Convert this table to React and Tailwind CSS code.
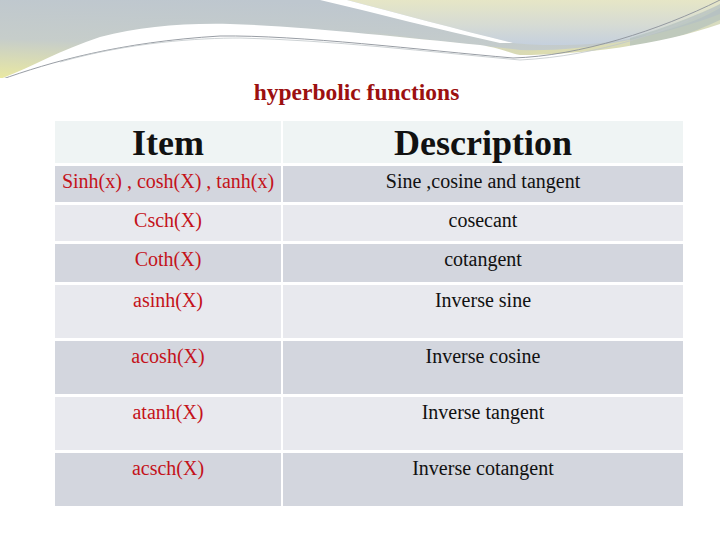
import React from 'react';

const rows = [
  { item: 'Sinh(x) , cosh(X) , tanh(x)', desc: 'Sine ,cosine and tangent', h: 'h-[36px]', bg: 'bg-[#d3d6de]' },
  { item: 'Csch(X)', desc: 'cosecant', h: 'h-[36px]', bg: 'bg-[#e8e9ee]' },
  { item: 'Coth(X)', desc: 'cotangent', h: 'h-[38px]', bg: 'bg-[#d3d6de]' },
  { item: 'asinh(X)', desc: 'Inverse sine', h: 'h-[53px]', bg: 'bg-[#e8e9ee]' },
  { item: 'acosh(X)', desc: 'Inverse cosine', h: 'h-[53px]', bg: 'bg-[#d3d6de]' },
  { item: 'atanh(X)', desc: 'Inverse tangent', h: 'h-[53px]', bg: 'bg-[#e8e9ee]' },
  { item: 'acsch(X)', desc: 'Inverse cotangent', h: 'h-[53px]', bg: 'bg-[#d3d6de]' },
];

// decorative header swoosh
const Swoosh = () => (
  <svg width="720" height="78" viewBox="0 0 720 78" className="block">
    <defs>
      <linearGradient id="leftFill" x1="0.35" y1="0" x2="0" y2="1">
        <stop offset="0" stopColor="#bec7cf" />
        <stop offset="0.55" stopColor="#c6cdca" />
        <stop offset="1" stopColor="#e9e8a2" />
      </linearGradient>
      <linearGradient id="rightFill" x1="0" y1="0" x2="0" y2="1">
        <stop offset="0" stopColor="#e6e6c6" />
        <stop offset="0.55" stopColor="#d6dbd4" />
        <stop offset="1" stopColor="#c5d0de" />
      </linearGradient>
      <linearGradient id="band" x1="0" y1="0" x2="1" y2="0">
        <stop offset="0" stopColor="#d6d8b8" stopOpacity="0" />
        <stop offset="0.5" stopColor="#dcdcb0" />
        <stop offset="1" stopColor="#d8dcc0" />
      </linearGradient>
    </defs>
    <rect width="720" height="78" fill="url(#leftFill)" />
    <path d="M360,30 C420,40 470,44 520,50 C580,52 650,40 720,14 L720,30 C660,48 580,58 520,58 C450,52 400,44 360,36 Z" fill="url(#band)" />
    <path d="M347,0 L720,0 L720,8 C690,26 640,40 590,44 C560,46 530,45 513,43 C460,30 400,14 347,0 Z" fill="url(#rightFill)" />
    <path d="M630,38 C665,28 700,14 720,4 L720,20 C690,34 665,42 630,48 Z" fill="#b3c0bc" opacity="0.7" />
    <path d="M320,0 L347,0 C400,14 460,30 513,43 L500,43 C440,30 380,14 320,0 Z" fill="#ffffff" />
    <path d="M0,79 C30,68 60,50 100,37 C140,27 180,23 230,24 C300,26 400,37 480,45 C500,48 510,53 520,55 C580,55 660,45 720,24 L720,80 L0,80 Z" fill="#ffffff" />
    <path d="M0,80 C50,62 120,42 220,36 C300,35 420,50 513,58 C580,56 660,30 720,0" fill="none" stroke="#8c929a" strokeWidth="0.9" />
    <path d="M60,62 C130,42 200,38 240,38 C330,40 430,52 520,60 C600,56 670,30 720,6" fill="none" stroke="#c2c8ca" strokeWidth="0.8" />
  </svg>
);

export default function App() {
  return (
    <div className="w-[720px] h-[540px] bg-white overflow-hidden font-['Liberation_Serif','Times_New_Roman',serif]">
      <Swoosh />
      <h1 className="mt-[1px] pr-[7px] text-center text-[23.5px] leading-[27px] font-bold text-[#9c1010]">
        hyperbolic functions
      </h1>
      <div className="mt-[15px] ml-[55px] grid grid-cols-[226px_400px] gap-x-[2px] gap-y-[3px]">
        <div className="h-[42px] bg-[#eff4f4] pt-[2px] text-center text-[36px] leading-[40px] font-bold text-[#111111]">Item</div>
        <div className="h-[42px] bg-[#eff4f4] pt-[2px] text-center text-[36px] leading-[40px] font-bold text-[#111111]">Description</div>
        {rows.map((r) => (
          <React.Fragment key={r.item}>
            <div className={`${r.h} ${r.bg} pt-[4px] text-center text-[20px] leading-[23px] text-[#c4121a] whitespace-nowrap`}>
              {r.item}
            </div>
            <div className={`${r.h} ${r.bg} pt-[4px] text-center text-[20px] leading-[23px] text-[#111111]`}>
              {r.desc}
            </div>
          </React.Fragment>
        ))}
      </div>
    </div>
  );
}
